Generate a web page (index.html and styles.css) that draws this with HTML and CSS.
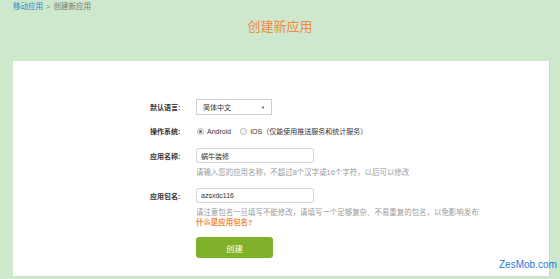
FILE: index.html
```html
<!DOCTYPE html>
<html lang="zh-CN">
<head>
<meta charset="utf-8">
<title>创建新应用</title>
<link rel="stylesheet" href="styles.css">
</head>
<body>
<div class="crumb"><a class="crumb-link">移动应用</a><span class="crumb-sep">&gt;</span><span class="crumb-cur">创建新应用</span></div>
<h1 class="title">创建新应用</h1>
<div class="card">
  <div class="form">
    <div class="row row-lang">
      <div class="label">默认语言:</div>
      <div class="select"><span class="select-text">简体中文</span><span class="select-arrow">▼</span></div>
    </div>
    <div class="row row-os">
      <div class="label">操作系统:</div>
      <span class="radio checked"></span><span class="radio-text">Android</span>
      <span class="radio"></span><span class="radio-text">IOS（仅能使用推送服务和统计服务）</span>
    </div>
    <div class="row">
      <div class="label">应用名称:</div>
      <div class="input">蜗牛装修</div>
    </div>
    <div class="hint">请输入您的应用名称，不超过8个汉字或16个字符，以后可以修改</div>
    <div class="row row-pkg">
      <div class="label">应用包名:</div>
      <div class="input">azsxdc116</div>
    </div>
    <div class="hint">请注意包名一旦填写不能修改，请填写一个足够复杂、不易重复的包名，以免影响发布</div>
    <div class="hint link">什么是应用包名?</div>
    <div class="btn">创建</div>
  </div>
</div>
<div class="watermark">ZesMob.com</div>
</body>
</html>
```
FILE: styles.css
```css
html, body {
  margin: 0;
  padding: 0;
}
body {
  background: #cde8cd;
  height: 279px;
  overflow: hidden;
  font-family: "Liberation Sans", "Noto Sans CJK SC", sans-serif;
  position: relative;
}
.crumb {
  height: 12px;
  line-height: 13px;
  padding-left: 13px;
  font-size: 7.5px;
  color: #777;
}
.crumb-link {
  color: #2a8bcf;
}
.crumb-sep {
  margin: 0 3px;
  color: #888;
}
.title {
  margin: 7px 0 26px;
  height: 16px;
  line-height: 16px;
  font-size: 13px;
  font-weight: normal;
  text-align: center;
  color: #f2883e;
}
.card {
  width: 536px;
  height: 215px;
  margin-left: 13px;
  background: #fff;
  box-shadow: 1px 1px 0 #d3d8d3;
}
.form {
  padding-top: 38px;
  padding-left: 137px;
}
.row {
  display: flex;
  align-items: center;
  font-size: 7px;
}
.label {
  width: 46px;
  flex: none;
  font-weight: bold;
  color: #333;
}
.row-lang {
  height: 16px;
  margin-bottom: 10px;
}
.row-os {
  height: 12px;
  margin-bottom: 11px;
}
.row-pkg {
  margin-top: 10px;
}
.select {
  width: 76px;
  height: 16px;
  box-sizing: border-box;
  border: 1px solid #cfcfcf;
  display: flex;
  align-items: center;
  justify-content: space-between;
  padding: 0 6px 0 6px;
  color: #333;
}
.select-arrow {
  font-size: 4px;
  color: #333;
}
.radio {
  width: 7px;
  height: 7px;
  box-sizing: border-box;
  border: 1px solid #b8b8b8;
  border-radius: 50%;
  margin-left: 1px;
  margin-right: 3px;
  display: flex;
  align-items: center;
  justify-content: center;
  background: #f4f4f4;
}
.radio.checked::after {
  content: "";
  width: 3px;
  height: 3px;
  border-radius: 50%;
  background: #666;
}
.radio-text {
  color: #333;
  margin-right: 8px;
}
.input {
  width: 118px;
  height: 15px;
  box-sizing: border-box;
  border: 1px solid #d6d6d6;
  border-radius: 2px;
  padding-left: 4px;
  display: flex;
  align-items: center;
  color: #333;
}
.hint {
  margin-left: 46px;
  margin-top: 5px;
  height: 10px;
  line-height: 10px;
  font-size: 7.45px;
  color: #9a9a9a;
  white-space: nowrap;
}
.hint.link {
  margin-top: 0;
  color: #f2883e;
  font-weight: bold;
}
.btn {
  margin-left: 46px;
  margin-top: 9px;
  width: 77px;
  height: 21px;
  border-radius: 3px;
  background: #7fb12a;
  color: #fff;
  font-size: 8.5px;
  display: flex;
  align-items: center;
  justify-content: center;
}
.watermark {
  position: absolute;
  left: 499px;
  top: 259px;
  font-size: 10px;
  line-height: 12px;
  color: #1c7be0;
}
```
